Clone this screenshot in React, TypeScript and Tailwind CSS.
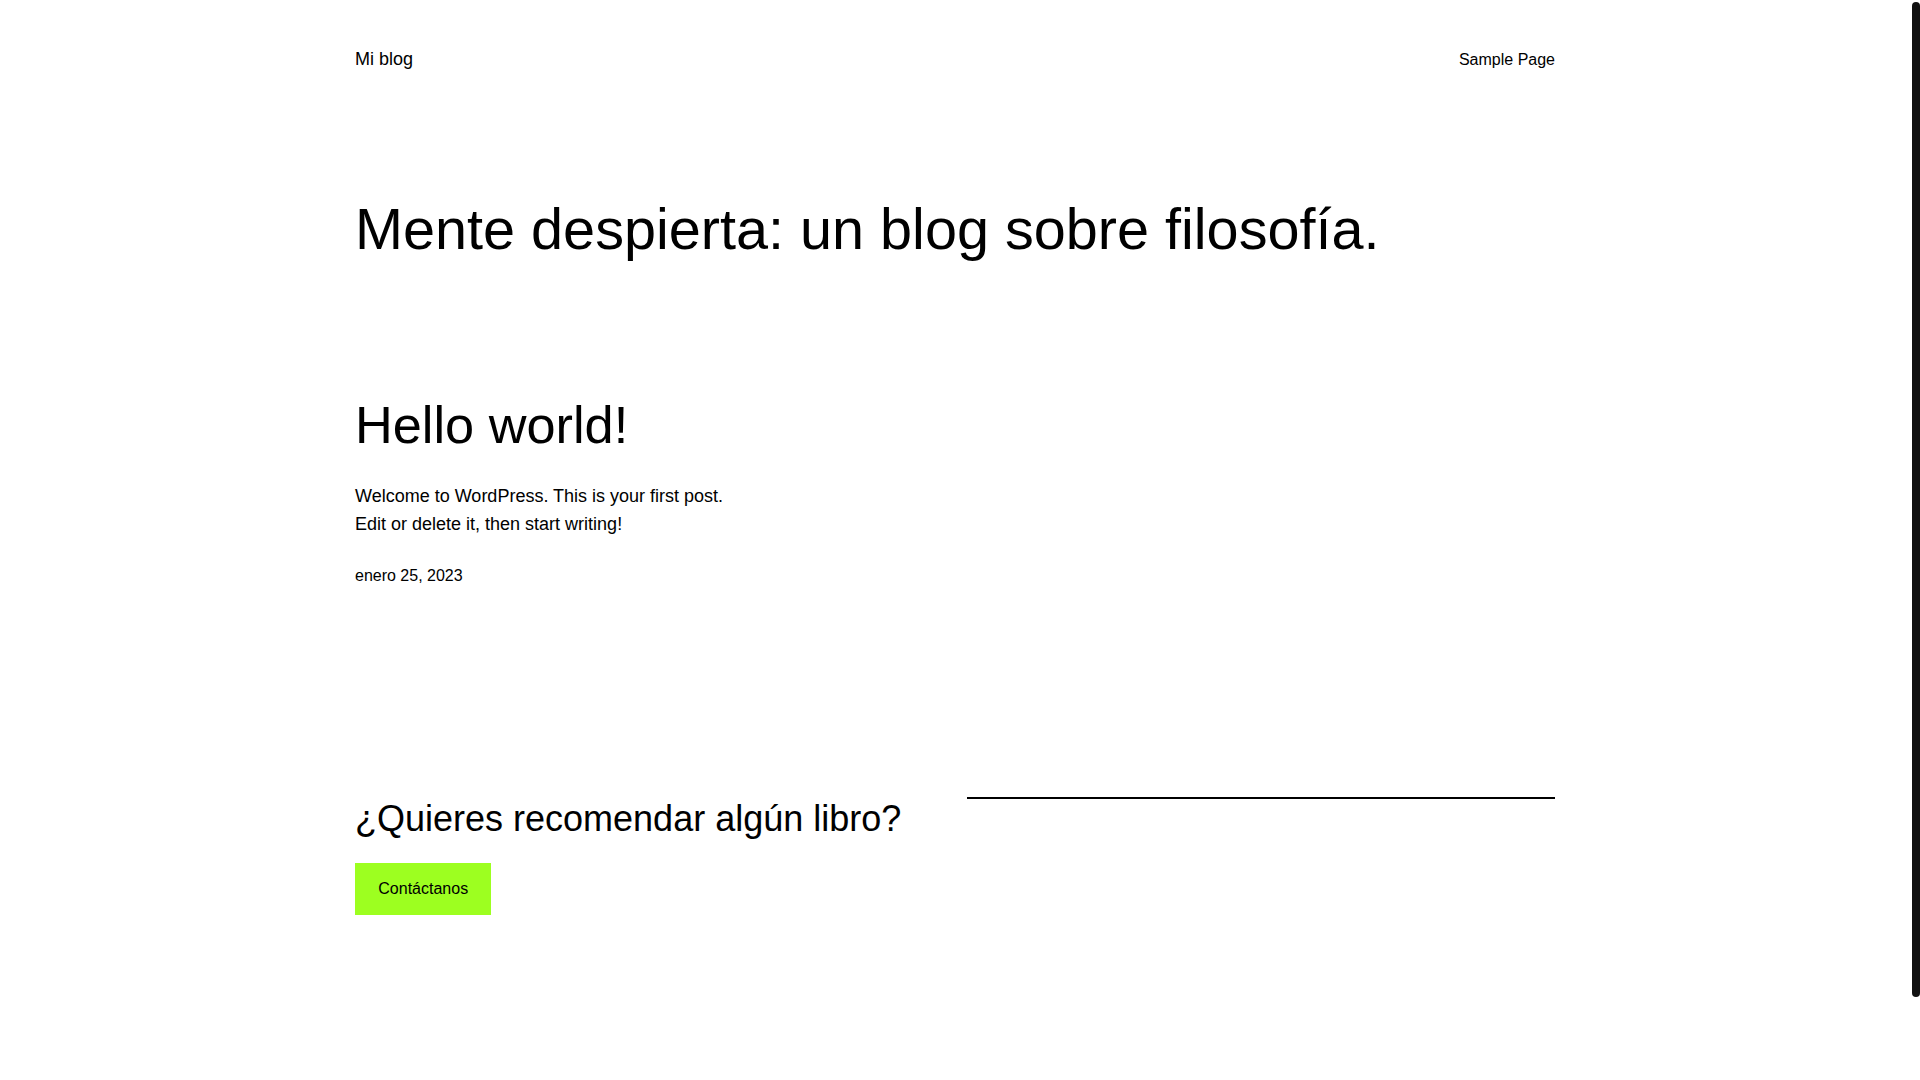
import React from "react";

export default function App() {
  return (
    <div
      className="flex h-screen overflow-hidden bg-white text-black"
      style={{ fontFamily: '"Liberation Sans", Arial, sans-serif' }}
    >
      <div className="min-w-0 flex-1">
        <div className="mx-auto w-[1200px] -translate-x-px pb-[257px]">
          <header className="flex items-baseline justify-between pt-[45px]">
            <a className="text-[18px] leading-[1.6] text-black">Mi blog</a>
            <nav>
              <a className="text-[16px] leading-[1.6] text-black">Sample Page</a>
            </nav>
          </header>

          <h1 className="mt-[121px] text-[57.6px] font-normal leading-[1.2] tracking-normal">
            Mente despierta: un blog sobre filosofía.
          </h1>

          <article className="mt-[130px]">
            <h2 className="text-[52.3px] font-normal leading-[1.2]">Hello world!</h2>
            <div className="mt-[25px] w-[390px] text-[18px] leading-[1.6]">
              <p>Welcome to WordPress. This is your first post. Edit or delete it, then start writing!</p>
            </div>
            <div className="mt-[24px] text-[16px] leading-[1.6]">enero 25, 2023</div>
          </article>

          <section className="mt-[208px] grid grid-cols-2 gap-6">
            <div className="flex flex-col items-start">
              <h2 className="text-[36px] font-normal leading-[1.2]">¿Quieres recomendar algún libro?</h2>
              <a className="mt-[23px] bg-[#9dff20] px-[23.3px] py-[13px] text-[16px] leading-[1.6] text-black">
                Contáctanos
              </a>
            </div>
            <div>
              <hr className="border-0 border-t-2 border-black" />
            </div>
          </section>
        </div>
      </div>
      <div className="w-[8px] shrink-0 pt-[2px]">
        <div className="h-[995px] w-[8px] rounded-[4px] bg-[#111111]" />
      </div>
    </div>
  );
}
